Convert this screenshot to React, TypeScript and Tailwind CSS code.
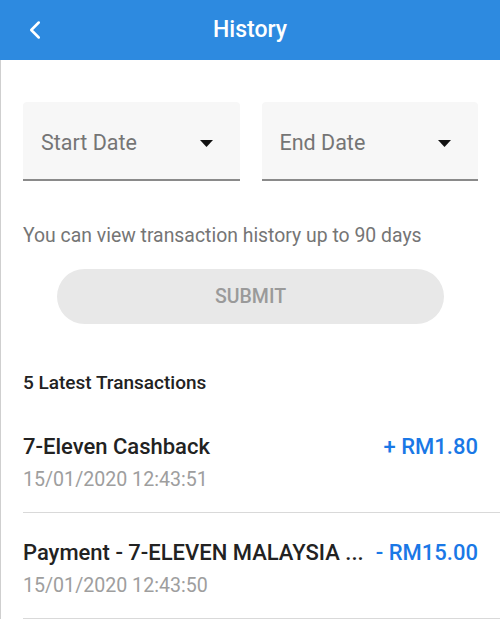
import { ChevronLeft } from 'lucide-react';

const transactions = [
    { title: '7-Eleven Cashback', date: '15/01/2020 12:43:51', amount: '+ RM1.80' },
    { title: 'Payment - 7-ELEVEN MALAYSIA ...', date: '15/01/2020 12:43:50', amount: '- RM15.00' },
];

function DateField({ label }: { label: string }) {
    return (
        <div className="flex-1 h-[79px] bg-[#f7f7f7] rounded-t-[4px] border-b-2 border-[#8a8a8a] flex items-center justify-between pl-[18px] pr-[27px] pt-[5px]">
            <span className="text-[21.5px] text-[#757575]">{label}</span>
            {/* dropdown arrow */}
            <svg width="13" height="7" viewBox="0 0 13 7">
                <path d="M0 0 L13 0 L6.5 7 Z" fill="#111" />
            </svg>
        </div>
    );
}

export default function App() {
    return (
        <div className="w-[500px] h-[619px] bg-white overflow-hidden" style={{ fontFamily: 'Roboto, "Noto Sans", sans-serif' }}>
            {/* header */}
            <div className="h-[60px] bg-[#2d8ae0] flex items-center relative">
                <ChevronLeft className="absolute left-[20px] top-[15px] w-[30px] h-[30px] text-white" strokeWidth={2} />
                <div className="flex-1 text-center text-white text-[23px] font-medium">History</div>
            </div>

            <div className="border-l border-[#cfcfcf] h-[559px] pt-[42px]">
                <div className="px-[22px]">
                    <div className="flex gap-[22px]">
                        <DateField label="Start Date" />
                        <DateField label="End Date" />
                    </div>

                    <p className="mt-[43px] text-[19.4px] leading-[24px] text-[#757575]">
                        You can view transaction history up to 90 days
                    </p>

                    <div className="mx-[34px] mt-[21px] h-[55px] rounded-full bg-[#e8e8e8] flex items-center justify-center text-[19.5px] font-medium text-[#9a9a9a]">
                        SUBMIT
                    </div>

                    <h2 className="mt-[47px] text-[19px] leading-[24px] font-medium text-[#222]">5 Latest Transactions</h2>
                </div>

                <div className="pl-[22px] mt-[12px]">
                    {transactions.map((t) => (
                        <div key={t.date} className="border-b border-[#d9d9d9] pr-[22px] pt-[25px] pb-[20px]">
                            <div className="flex items-center justify-between h-[28px]">
                                <span className="text-[22px] font-medium text-[#222] whitespace-nowrap">{t.title}</span>
                                <span className="text-[22px] font-medium text-[#1a78e6] whitespace-nowrap">{t.amount}</span>
                            </div>
                            <div className="mt-[8px] text-[19.6px] leading-[24px] text-[#9e9e9e]">{t.date}</div>
                        </div>
                    ))}
                </div>
            </div>
        </div>
    );
}
